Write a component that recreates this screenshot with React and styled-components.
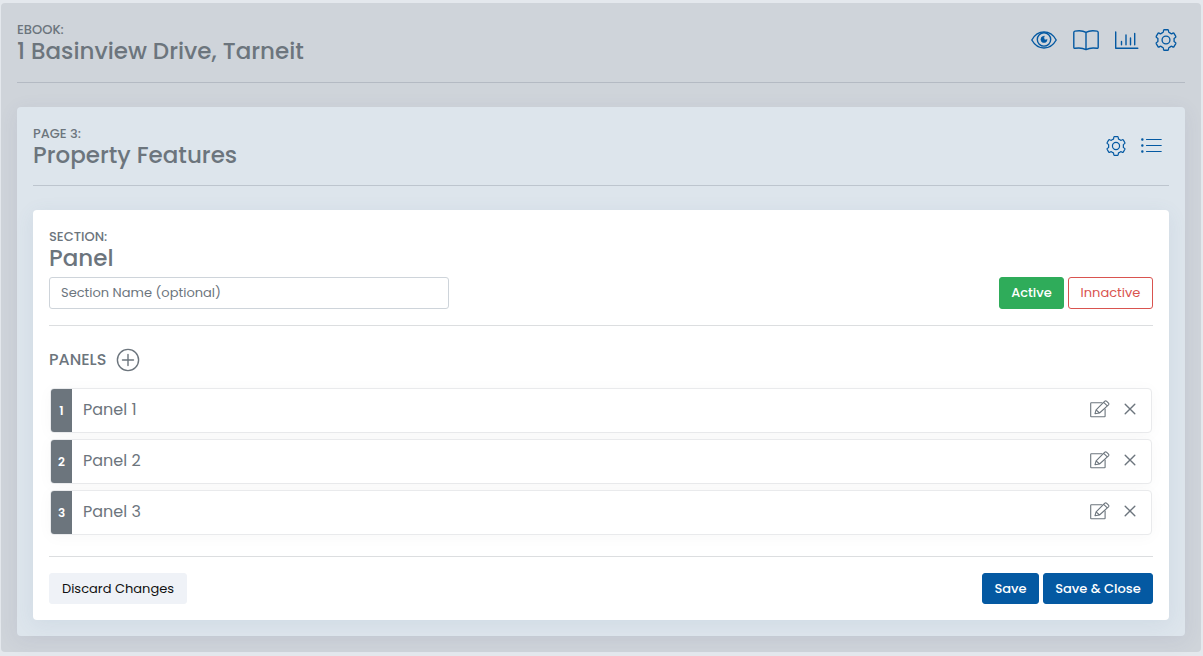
import React from "react";
import styled, { createGlobalStyle } from "styled-components";

const GlobalStyle = createGlobalStyle`
  *, *::before, *::after { box-sizing: border-box; }
  body {
    margin: 0;
    padding: 3px 2px 4px 1px;
    background: #e4e8ed;
    color: #6c757d;
    font-family: Poppins, Inter, "Open Sans", sans-serif;
    font-size: 13px;
  }
  h1, h2, h3, h4, p, ul, ol { margin: 0; padding: 0; }
  button, input { font: inherit; }
`;

const Card = styled.section`
  padding: 16px;
  border-radius: 4px;
  background: ${(p) => p.$tone};
  box-shadow: ${(p) => p.$shadow || "none"};
`;

const Workspace = styled.main`
  padding: 16px;
  border-radius: 4px;
  background: #cfd4da;
`;

const Header = styled.header`
  display: flex;
  align-items: center;
  justify-content: space-between;
  padding: 0 ${(p) => p.$inset || 0}px ${(p) => p.$space}px 0;
  margin-bottom: 24px;
  border-bottom: 1px solid ${(p) => p.$line};
`;

const Eyebrow = styled.p`
  font-size: 13px;
  font-weight: 500;
  line-height: 22px;
  text-transform: uppercase;
`;

const Title = styled.h1`
  font-size: 23px;
  font-weight: 500;
  line-height: 20px;
`;

const Toolbar = styled.nav`
  display: flex;
  align-items: center;
  gap: ${(p) => p.$gap}px;
  padding-top: ${(p) => p.$drop || 0}px;
`;

const IconButton = styled.button`
  display: flex;
  padding: 0;
  border: 0;
  background: none;
  color: ${(p) => (p.$primary ? "#0459a2" : "#6c757d")};
  cursor: pointer;

  svg {
    display: block;
    fill: none;
    stroke: currentColor;
    stroke-width: ${(p) => p.$stroke || "1.4"};
    stroke-linejoin: round;
    stroke-linecap: round;
  }
`;

const Row = styled.div`
  display: flex;
  align-items: center;
  justify-content: space-between;
  gap: 16px;
`;

const NameRow = styled(Row)`
  padding: 9px 0 16px;
  border-bottom: 1px solid #dcdee0;
`;

const TextInput = styled.input`
  width: 400px;
  max-width: 60%;
  height: 32px;
  padding: 0 11px;
  border: 1px solid #ced4da;
  border-radius: 3px;
  background: #fff;
  color: #6c757d;
  font-size: 13px;

  &::placeholder { color: #6c757d; opacity: 1; }
`;

const ButtonGroup = styled.div`
  display: flex;
  gap: 4px;
`;

const tones = {
  success: ["#2fac5a", "#2fac5a", "#fff"],
  danger: ["#fff", "#d9534f", "#d9534f"],
  light: ["#eff2f7", "#eff2f7", "#111"],
  primary: ["#0459a2", "#0459a2", "#fff"],
};

const Button = styled.button`
  height: ${(p) => p.$height || 31}px;
  width: ${(p) => p.$width}px;
  padding: 0;
  border: 1px solid ${(p) => tones[p.$tone][1]};
  border-radius: 3px;
  background: ${(p) => tones[p.$tone][0]};
  color: ${(p) => tones[p.$tone][2]};
  font-size: 13px;
  font-weight: ${(p) => (p.$bold ? 500 : 400)};
  white-space: nowrap;
  cursor: pointer;
`;

const PanelsHeading = styled.div`
  display: flex;
  align-items: center;
  gap: 10px;
  padding: 22px 0 16px;

  h3 {
    font-size: 16px;
    font-weight: 500;
    line-height: 24px;
    text-transform: uppercase;
  }
`;

const PanelList = styled.ol`
  display: flex;
  flex-direction: column;
  gap: 6px;
  padding: 0 1px;
  margin-bottom: 21px;
  list-style: none;
`;

const PanelItem = styled.li`
  display: flex;
  align-items: stretch;
  height: 45px;
  border: 1px solid #e9eaec;
  border-radius: 4px;
  background: #fff;
  box-shadow: 0 2px 16px rgba(0, 0, 0, 0.03);
`;

const PanelNumber = styled.span`
  display: flex;
  align-items: center;
  justify-content: center;
  width: 21px;
  border-radius: 3px 0 0 3px;
  background: #6c757d;
  color: #fff;
  font-size: 12px;
  font-weight: 600;
`;

const PanelName = styled.span`
  flex: 1;
  padding-left: 11px;
  font-size: 16px;
  line-height: 42px;
`;

const PanelActions = styled.div`
  display: flex;
  align-items: center;
  gap: 14px;
  padding: 0 15px 4px 0;
`;

const Footer = styled(Row)`
  padding-top: 16px;
  border-top: 1px solid #dcdee0;
`;

const Gear = ({ size }) => (
  <svg width={size} height={size} viewBox="0.5 0.5 23 23" aria-hidden="true">
    <path d={gearPath} />
    <circle cx="12" cy="12" r="4.1" />
  </svg>
);

const polar = (deg, r) => {
  const t = (deg * Math.PI) / 180;
  return `${(12 + r * Math.sin(t)).toFixed(2)} ${(12 - r * Math.cos(t)).toFixed(2)}`;
};

// Six teeth with flat tops, joined by rounded shoulders
const gearPath =
  [0, 60, 120, 180, 240, 300]
    .map(
      (a, i) =>
        `${i ? "L" : "M"}${polar(a - 16, 9.6)}Q${polar(a - 15, 10.9)} ${polar(a - 10, 10.9)}` +
        `L${polar(a + 10, 10.9)}Q${polar(a + 15, 10.9)} ${polar(a + 16, 9.6)}` +
        `Q${polar(a + 18, 8.2)} ${polar(a + 25, 8.5)}L${polar(a + 35, 8.5)}Q${polar(a + 42, 8.2)} ${polar(a + 44, 9.6)}`
    )
    .join("") + "Z";

const Eye = () => (
  <svg width="26" height="20" viewBox="0 0 26 20" aria-hidden="true">
    <path d="M.8 10C3.6 5 7.900 1.900 13 1.900S22.400 5 25.200 10C22.400 15 18.100 18 13 18S3.600 15 .8 10Z" />
    <circle cx="13" cy="9.400" r="6.700" />
    <path d="M13 6.300a3.100 3.100 0 1 0 3.100 3.100c-.7.700-2 .6-2.600 0s-.9-1.900-.5-3.100Z" fill="currentColor" strokeWidth=".6" />
  </svg>
);

const Book = () => (
  <svg width="26" height="22" viewBox="0 0 26 22" aria-hidden="true">
    <path d="M13 3.400C10.500 1.800 6 1.400 1.900 2.100Q.8 2.300.8 3.400V18.200Q.8 19.500 2.100 19.300C6 18.700 10 19 13 20.600C16 19 20 18.700 23.900 19.300Q25.200 19.500 25.200 18.200V3.400Q25.200 2.300 24.100 2.100C20 1.400 15.500 1.800 13 3.400ZM13 3.400V20.600" />
  </svg>
);

const Chart = () => (
  <svg width="24" height="20" viewBox="0 0 24 20" aria-hidden="true">
    <path d="M.7 2V18.300H22.800M6.500 14.700V11.500M11 14.700V5M15.500 14.700V8M19.700 14.700V3.500" />
  </svg>
);

const List = () => (
  <svg width="22" height="16" viewBox="0 0 22 16" aria-hidden="true">
    <path d="M5.500 1.500H20.200M5.500 7.500H20.200M5.500 13.500H20.200" strokeWidth="1.200" />
    <path d="M1.300 1.500h.1M1.300 7.500h.1M1.300 13.500h.1" strokeWidth="2.400" />
  </svg>
);

const Plus = () => (
  <svg width="24" height="24" viewBox="0 0 24 24" aria-hidden="true">
    <circle cx="12" cy="12" r="10.600" />
    <path d="M12 6.500v11M6.500 12h11" />
  </svg>
);

const Edit = () => (
  <svg width="20" height="18" viewBox="0 0 20 18" aria-hidden="true">
    <path d="M12 2.800H1.300Q.7 2.800.7 3.400V16.200Q.7 16.800 1.300 16.800H14.500Q15.100 16.800 15.100 16.200V9" />
    <path d="M5 13.700L6.100 9.900L14.800 1.200Q15.600.500 16.500 1.200L18.500 3.100Q19.300 4 18.500 4.800L9.500 13ZM6.100 9.900L9.500 13M13.700 2.300L17.300 5.900" />
  </svg>
);

const Cross = () => (
  <svg width="12" height="12" viewBox="0 0 12 12" aria-hidden="true">
    <path d="M1.200 1.200L10.800 10.800M10.800 1.200L1.200 10.800" />
  </svg>
);

const panels = ["Panel 1", "Panel 2", "Panel 3"];

export default function App() {
  return (
    <>
      <GlobalStyle />
      <Workspace>
        <Header $line="#b4bac3" $inset={8} $space={21}>
          <div>
            <Eyebrow>Ebook:</Eyebrow>
            <Title>1 Basinview Drive, Tarneit</Title>
          </div>
          <Toolbar $gap={16} aria-label="Ebook tools">
            <IconButton $primary aria-label="Preview"><Eye /></IconButton>
            <IconButton $primary aria-label="Pages"><Book /></IconButton>
            <IconButton $primary aria-label="Statistics"><Chart /></IconButton>
            <IconButton $primary aria-label="Ebook settings"><Gear size={22} /></IconButton>
          </Toolbar>
        </Header>

        <Card $tone="#dde5ec" $shadow="0 4px 20px rgba(80, 80, 130, 0.09)">
          <Header $line="#bdc5ce" $inset={6} $space={20}>
            <div>
              <Eyebrow>Page 3:</Eyebrow>
              <Title as="h2">Property Features</Title>
            </div>
            <Toolbar $gap={15} $drop={4} aria-label="Page tools">
              <IconButton $primary aria-label="Page settings"><Gear size={20} /></IconButton>
              <IconButton $primary aria-label="Page sections"><List /></IconButton>
            </Toolbar>
          </Header>

          <Card $tone="#fff" $shadow="0 4px 20px rgba(80, 110, 150, 0.09)">
            <Eyebrow>Section:</Eyebrow>
            <Title as="h2">Panel</Title>
            <NameRow>
              <TextInput type="text" placeholder="Section Name (optional)" aria-label="Section name" />
              <ButtonGroup>
                <Button $tone="success" $bold $height={32} $width={65}>Active</Button>
                <Button $tone="danger" $height={32} $width={85}>Innactive</Button>
              </ButtonGroup>
            </NameRow>

            <PanelsHeading>
              <h3>Panels</h3>
              <IconButton aria-label="Add panel"><Plus /></IconButton>
            </PanelsHeading>

            <PanelList>
              {panels.map((name, i) => (
                <PanelItem key={name}>
                  <PanelNumber>{i + 1}</PanelNumber>
                  <PanelName>{name}</PanelName>
                  <PanelActions>
                    <IconButton $stroke="1.1" aria-label={`Edit ${name}`}><Edit /></IconButton>
                    <IconButton aria-label={`Remove ${name}`}><Cross /></IconButton>
                  </PanelActions>
                </PanelItem>
              ))}
            </PanelList>

            <Footer>
              <Button $tone="light" $width={138}>Discard Changes</Button>
              <ButtonGroup>
                <Button $tone="primary" $bold $width={57}>Save</Button>
                <Button $tone="primary" $bold $width={110}>Save &amp; Close</Button>
              </ButtonGroup>
            </Footer>
          </Card>
        </Card>
      </Workspace>
    </>
  );
}
